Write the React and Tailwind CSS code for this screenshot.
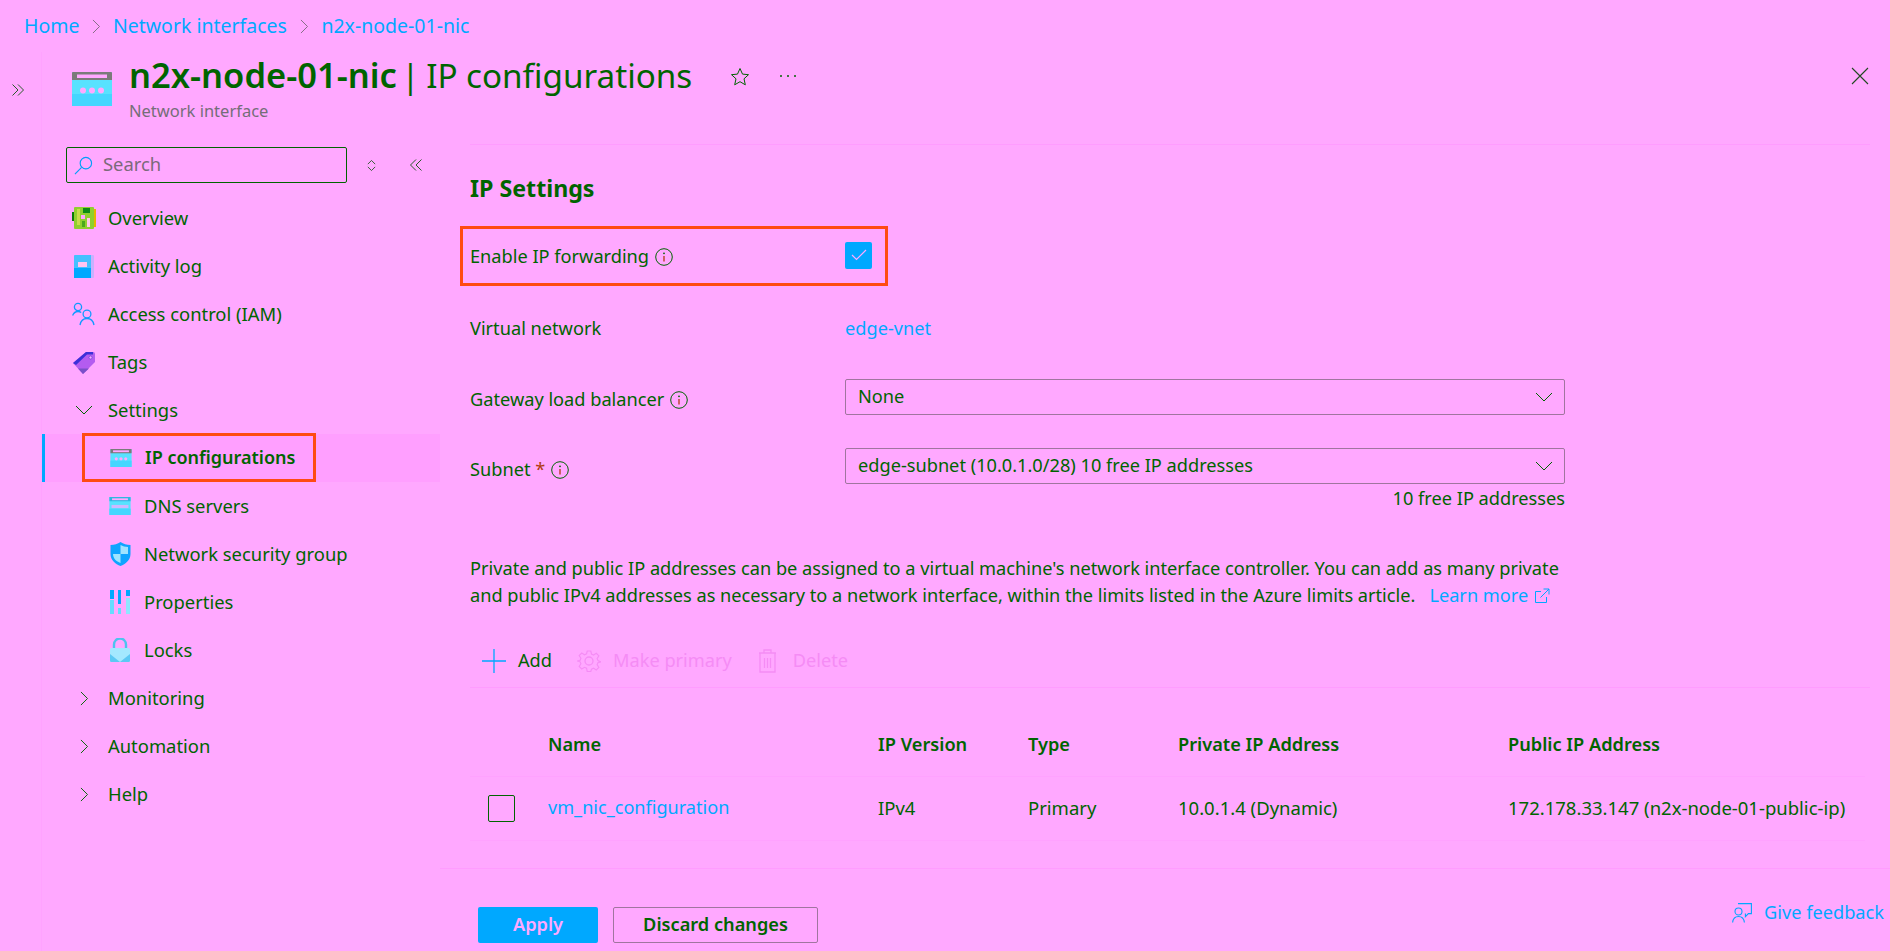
const Chev = ({ dir = "right", size = 15, color = "#006400", className = "" }) => {
  const paths = {
    right: "M1 1l7 7-7 7",
    left: "M8 1L1 8l7 7",
    down: "M1 1l8 8 8-8",
  };
  const box = dir === "down" ? [18, 10] : [9, 16];
  const ratio = size / Math.max(box[0], box[1]);
  return (
    <svg
      viewBox={`0 0 ${box[0]} ${box[1]}`}
      width={box[0] * ratio}
      height={box[1] * ratio}
      fill="none"
      stroke={color}
      strokeWidth="1"
      className={className}
    >
      <path d={paths[dir]} />
    </svg>
  );
};

const DoubleChev = ({ flip, className = "" }) => (
  <svg viewBox="0 0 12 12" className={`w-[12px] h-[12px] ${className}`} fill="none" stroke="#2a5a2a" strokeWidth="1">
    <path d={flip ? "M6 .5.5 6 6 11.500M11.500 .5 6 6l5.500 5.500" : "M.5 .5 6 6 .5 11.500M6 .5 11.500 6 6 11.500"} />
  </svg>
);

const NicIcon = ({ className, dns }) => (
  <svg viewBox="0 0 40 34" className={className}>
    <rect x="0" y="0" width="40" height="34" rx="1" fill="#58e2ff" />
    <rect x="0" y="22" width="40" height="12" fill="#45d6ff" />
    <path d="M0 1a1 1 0 0 1 1-1h38a1 1 0 0 1 1 1v7H0z" fill={dns ? "#2fb8e0" : "#7a7a7a"} />
    <rect x="5" y="2.500" width="30" height="3.500" fill="#ffa8ff" />
    {dns ? (
      <rect x="4" y="15" width="32" height="6" fill="#ffa8ff" opacity="0.7" />
    ) : (
      <>
        <circle cx="11" cy="18.500" r="3" fill="#ffa8ff" />
        <circle cx="20" cy="18.500" r="3" fill="#ffa8ff" />
        <circle cx="29" cy="18.500" r="3" fill="#ffa8ff" />
      </>
    )}
  </svg>
);

const OverviewIcon = () => (
  <svg viewBox="0 0 24 22" className="w-[24px] h-[22px]">
    <rect x="0" y="5" width="3" height="9" fill="#0a7a0a" />
    <rect x="21" y="2" width="3" height="18" fill="#e8b400" />
    <rect x="2" y="0" width="20" height="22" rx="1" fill="#8fcf2f" />
    <rect x="11" y="1" width="7" height="5" fill="#0c8a14" />
    <rect x="5" y="2" width="3" height="16" fill="#c7dc4a" />
    <rect x="9" y="8" width="4" height="4" fill="#ffa8ff" />
    <rect x="15" y="11" width="3" height="9" fill="#ffc8e8" />
    <rect x="10" y="14" width="3" height="6" fill="#4aa81c" />
  </svg>
);

const ActivityIcon = () => (
  <svg viewBox="0 0 20 23" className="w-[20px] h-[23px]">
    <rect x="0" y="0" width="20" height="23" rx="1" fill="#c9b0ff" />
    <path d="M0 1a1 1 0 0 1 1-1h16v23H1a1 1 0 0 1-1-1z" fill="#45c0ff" />
    <rect x="0" y="13" width="17" height="10" fill="#00a8ff" />
    <rect x="4" y="7" width="9" height="5" fill="#ffc4f0" />
  </svg>
);

const IamIcon = () => (
  <svg viewBox="0 0 24 24" className="w-[24px] h-[24px]" fill="none" stroke="#0f9bff" strokeWidth="1.300">
    <circle cx="6" cy="5" r="3.600" />
    <path d="M0.600 13.500c1-2.500 3-4 5.400-4 1.200 0 2.300.4 3.200 1" />
    <circle cx="15" cy="12" r="3.900" />
    <path d="M8 23c.8-4 3.500-6.500 7-6.500s6.200 2.500 7 6.500" />
  </svg>
);

const TagIcon = () => (
  <svg viewBox="0 0 22 23" className="w-[22px] h-[23px]">
    <path d="M13 1h7a2 2 0 0 1 2 2v8L10 23 0 12z" fill="#b45cf0" />
    <path d="M0 12 13 1h7v2.500H14L3 14z" fill="#3b30d8" />
    <path d="M5 17.500h11L10 23z" fill="#7a50c8" />
    <circle cx="17.500" cy="6.500" r="1.500" fill="#ffa8ff" stroke="#5a3ad0" strokeWidth="0.600" />
  </svg>
);

const ShieldIcon = () => (
  <svg viewBox="0 0 21 24" className="w-[21px] h-[24px]">
    <path d="M10.500 0c3 2 6 3 10 3v9c0 6-5 10-10 12C5.500 22 .5 18 .5 12V3c4 0 7-1 10-3z" fill="#0fa4ff" />
    <path d="M10.500 3c2 1.200 5 2 7.500 2v7h-7.500zM10.500 12v9c-4-1.500-7.500-4.500-7.500-9z" fill="#a0e4ff" />
  </svg>
);

const PropertiesIcon = () => (
  <svg viewBox="0 0 20 24" className="w-[20px] h-[24px]">
    <rect x="0" y="0" width="4" height="9" fill="#00a8ff" />
    <rect x="0" y="10" width="4" height="14" fill="#66dcff" />
    <rect x="8" y="0" width="3" height="14" fill="#00a8ff" />
    <rect x="8" y="18" width="3" height="6" fill="#66dcff" />
    <rect x="16" y="0" width="4" height="6" fill="#00a8ff" />
    <rect x="16" y="8" width="4" height="16" fill="#8fe6ff" />
  </svg>
);

const LockIcon = () => (
  <svg viewBox="0 0 20 24" className="w-[20px] h-[24px]">
    <path d="M4 11V6.500a6 6 0 0 1 12 0V11" fill="none" stroke="#4cc4ee" strokeWidth="2.400" />
    <rect x="0" y="10" width="20" height="14" rx="1.500" fill="#a4e8ff" />
    <path d="M0 16l10 8H1.500A1.500 1.500 0 0 1 0 22.500zM20 16l-10 8h8.500a1.500 1.500 0 0 0 1.500-1.500z" fill="#5cc8f4" />
  </svg>
);

const SearchIcon = () => (
  <svg viewBox="0 0 20 20" className="w-[19px] h-[19px]" fill="none" stroke="#00a0f8" strokeWidth="1.200">
    <circle cx="12.500" cy="7.500" r="6" />
    <path d="M8 12 1 19" />
  </svg>
);

const SortIcon = () => (
  <svg viewBox="0 0 12 14" className="w-[11px] h-[13px]" fill="none" stroke="#2a5a2a" strokeWidth="1">
    <path d="M2 5.500 6 1.500l4 4M2 8.500l4 4 4-4" />
  </svg>
);

const InfoIcon = () => (
  <svg viewBox="0 0 18 18" className="w-[18px] h-[18px]" fill="none" stroke="#006400" strokeWidth="1">
    <circle cx="9" cy="9" r="8.300" />
    <path d="M9 8v5.500" stroke="#b03a10" strokeWidth="1.300" />
    <circle cx="9" cy="5.300" r="0.900" fill="#006400" stroke="none" />
  </svg>
);

const GearIcon = () => (
  <svg viewBox="0 0 24 24" className="w-[24px] h-[24px]" fill="none" stroke="#f58cf5" strokeWidth="1.300">
    <circle cx="12" cy="12" r="4" />
    <path d="M10 1h4l.7 3.400 2.300 1 3-1.900 2.800 2.800-1.900 3 1 2.300L25 13v0l-3.100.7-1 2.300 1.900 3-2.800 2.800-3-1.900-2.300 1L14 23.500h-4l-.7-3.600-2.300-1-3 1.900-2.800-2.800 1.900-3-1-2.300L-1 12v0l3.100-.7 1-2.300-1.900-3L4 3.200l3 1.900 2.300-1z" transform="translate(1.100 1.100) scale(0.91)" />
  </svg>
);

const TrashIcon = () => (
  <svg viewBox="0 0 19 24" className="w-[19px] h-[24px]" fill="none" stroke="#f58cf5" strokeWidth="1.300">
    <path d="M1 4h17M6 4V1h7v3M2 4v19h15V4M6.500 9v10M9.500 9v10M12.500 9v10" />
  </svg>
);

const ExternalIcon = () => (
  <svg viewBox="0 0 16 16" className="w-[16px] h-[16px]" fill="none" stroke="#00a8ff" strokeWidth="1">
    <path d="M7 3.500H1.500v11h11V9M9.500 1h5.500v5.500M15 1 6.500 9.500" />
  </svg>
);

const FeedbackIcon = () => (
  <svg viewBox="0 0 20 20" className="w-[20px] h-[20px]" fill="none" stroke="#00a8ff" strokeWidth="1.100">
    <path d="M6 .6h13.400v10h-3l-3 3v-3" />
    <circle cx="6.500" cy="8.500" r="3.500" />
    <path d="M.6 19.500c.4-3.500 2.800-6 5.900-6s5.500 2.500 5.900 6" />
  </svg>
);

const NavItem = ({ icon, label, indent, active }) => {
  const inner = (
    <>
      <span className="flex items-center justify-center w-[28px] mr-[10px]">{icon}</span>
      <span className={active ? "font-semibold text-[18px]" : ""}>{label}</span>
    </>
  );
  if (active) {
    return (
      <div className="h-[48px] flex bg-[#ff9fff] border-l-[3px] border-[#00a8ff]">
        <div className="ml-[37px] w-[234px] h-[49px] -mt-px border-[3px] border-[#ff4b12] flex items-center pl-[22px]">
          {inner}
        </div>
      </div>
    );
  }
  return <div className={`h-[48px] flex items-center ${indent ? "pl-[64px]" : "pl-[28px]"}`}>{inner}</div>;
};

const Select = ({ value }) => (
  <div className="h-[36px] w-[720px] border border-[#a0759f] rounded-[2px] flex items-center justify-between pl-[12px] pr-[11px]">
    <span>{value}</span>
    <Chev dir="down" size={18} />
  </div>
);

const columns = "grid grid-cols-[330px_150px_150px_330px_1fr]";

export default function App() {
  return (
    <div className="w-[1890px] h-[951px] overflow-hidden flex flex-col bg-[#ffa8ff] text-[#006400] text-[18.2px] font-['Noto_Sans',sans-serif]">
      {/* Breadcrumb */}
      <div className="h-[52px] shrink-0 flex items-center pl-[24px] text-[#00a8ff] text-[19.5px]">
        <span>Home</span>
        <Chev size={15} color="#806a80" className="mx-[12.5px]" />
        <span>Network interfaces</span>
        <Chev size={15} color="#806a80" className="mx-[13px]" />
        <span>n2x-node-01-nic</span>
      </div>

      <div className="flex-1 flex min-h-0">
        {/* Collapsed rail */}
        <div className="w-[42px] shrink-0 border-r border-[#ffa2ff] pl-[12px] pt-[32px]">
          <DoubleChev />
        </div>

        <div className="flex-1 flex flex-col min-w-0">
          {/* Header */}
          <div className="h-[92px] shrink-0 flex pl-[30px] pr-[18px]">
            <NicIcon className="w-[40px] h-[34px] mt-[20px]" />
            <div className="ml-[17px] mt-[1px]">
              <div className="text-[33.2px] leading-[44px] whitespace-nowrap">
                <span className="font-semibold text-[34.5px]">n2x-node-01-nic</span>
                <span className="ml-[4.5px]">|</span>
                <span className="ml-[6.5px]">IP configurations</span>
              </div>
              <div className="text-[16.5px] leading-[22px] text-[#746e78] mt-[2px]">Network interface</div>
            </div>
            <svg viewBox="0 0 20 20" className="w-[20px] h-[20px] ml-[38px] mt-[15px]" fill="none" stroke="#006400" strokeWidth="1">
              <path d="M10 1.500l2.500 5.600 6 .6-4.500 4.100 1.300 6-5.300-3.100-5.300 3.100 1.300-6L1.500 7.700l6-.6z" />
            </svg>
            <svg viewBox="0 0 18 4" className="w-[18px] h-[4px] ml-[29px] mt-[22px]" fill="#006400">
              <circle cx="2" cy="2" r="1" />
              <circle cx="9" cy="2" r="1" />
              <circle cx="16" cy="2" r="1" />
            </svg>
            <svg viewBox="0 0 18 18" className="w-[18px] h-[18px] ml-auto mt-[15px] mr-[3px]" fill="none" stroke="#224a22" strokeWidth="1.100">
              <path d="M1 1l16 16M17 1 1 17" />
            </svg>
          </div>

          <div className="flex-1 flex min-h-0">
            {/* Sidebar */}
            <div className="w-[398px] shrink-0 pt-[3px] text-[18.4px]">
              <div className="flex items-center h-[36px] pl-[24px]">
                <div className="w-[281px] h-[36px] border border-[#006400] rounded-[2px] flex items-center pl-[7px] gap-[10px] text-[#7a6a7a]">
                  <SearchIcon />
                  <span className="-mt-[2px]">Search</span>
                </div>
                <span className="ml-[19px]"><SortIcon /></span>
                <DoubleChev flip className="ml-[33px]" />
              </div>
              <div className="mt-[11px]">
                <NavItem icon={<OverviewIcon />} label="Overview" />
                <NavItem icon={<ActivityIcon />} label="Activity log" />
                <NavItem icon={<IamIcon />} label="Access control (IAM)" />
                <NavItem icon={<TagIcon />} label="Tags" />
                <NavItem icon={<Chev dir="down" size={18} />} label="Settings" />
                <NavItem active indent icon={<NicIcon className="w-[22px] h-[18px]" />} label="IP configurations" />
                <NavItem indent icon={<NicIcon dns className="w-[22px] h-[18px]" />} label="DNS servers" />
                <NavItem indent icon={<ShieldIcon />} label="Network security group" />
                <NavItem indent icon={<PropertiesIcon />} label="Properties" />
                <NavItem indent icon={<LockIcon />} label="Locks" />
                <NavItem icon={<Chev size={15} />} label="Monitoring" />
                <NavItem icon={<Chev size={15} />} label="Automation" />
                <NavItem icon={<Chev size={15} />} label="Help" />
              </div>
            </div>

            {/* Main */}
            <div className="flex-1 flex flex-col min-w-0">
              <div className="flex-1 pl-[30px] pr-[20px] min-h-0">
                <div className="border-t border-[#ff9cff] pt-[28px]">
                  <h2 className="text-[23.2px] leading-[30px] font-bold">IP Settings</h2>
                </div>

                <div className="mt-[23px] -ml-[10px] w-[428px] h-[60px] border-[3px] border-[#ff4b12] flex items-center pl-[7px] pr-[13px]">
                  <span className="pt-[2px]">Enable IP forwarding</span>
                  <span className="ml-[6px] pt-[2px]"><InfoIcon /></span>
                  <span className="ml-auto w-[27px] h-[27px] rounded-[2px] bg-[#00a8ff] flex items-center justify-center -mt-[2px]">
                    <svg viewBox="0 0 16 12" className="w-[16px] h-[12px]" fill="none" stroke="#ffa8ff" strokeWidth="1.200">
                      <path d="M1 6l4.500 4.500L15 1" />
                    </svg>
                  </span>
                </div>

                <div className="mt-[24px] h-[36px] flex items-center pt-[1px]">
                  <span className="w-[375px]">Virtual network</span>
                  <span className="text-[#00a8ff]">edge-vnet</span>
                </div>

                <div className="mt-[33px] h-[36px] flex items-center">
                  <span className="w-[375px] flex items-center gap-[6px] translate-y-[3px]">Gateway load balancer <InfoIcon /></span>
                  <Select value="None" />
                </div>

                <div className="mt-[33px] h-[36px] flex items-center">
                  <span className="w-[375px] flex items-center gap-[6px] translate-y-[4px]">
                    <span>
                      Subnet <span className="text-[#b03a10]">*</span>
                    </span>
                    <InfoIcon />
                  </span>
                  <Select value="edge-subnet (10.0.1.0/28) 10 free IP addresses" />
                </div>
                <div className="w-[1095px] flex justify-end leading-[26px] mt-px">
                  <span>10 free IP addresses</span>
                </div>

                <p className="mt-[44px] w-[1110px] leading-[27px]">
                  Private and public IP addresses can be assigned to a virtual machine's network interface controller. You can add as many private and public IPv4 addresses as necessary to a network interface, within the limits listed in the Azure limits article.
                  <span className="text-[#00a8ff] ml-[14px] inline-flex items-center gap-[6px]">Learn more <ExternalIcon /></span>
                </p>

                <div className="mt-[33px] h-[46px] border-b border-[#ff9cff] flex items-center pb-[8px] pl-[12px]">
                  <svg viewBox="0 0 24 24" className="w-[24px] h-[24px]" fill="none" stroke="#00a8ff" strokeWidth="1.300">
                    <path d="M12 0v24M0 12h24" />
                  </svg>
                  <span className="ml-[12px]">Add</span>
                  <span className="ml-[25px]"><GearIcon /></span>
                  <span className="ml-[12px] text-[#f58cf5]">Make primary</span>
                  <span className="ml-[26px]"><TrashIcon /></span>
                  <span className="ml-[16px] text-[#f58cf5]">Delete</span>
                </div>

                <div className="pr-[5px] text-[18.5px]">
                  <div className={`${columns} h-[89px] pt-[44px] leading-[24px] pl-[78px] font-semibold border-b border-[#ffa2ff]`}>
                    <span className="text-[18.2px]">Name</span>
                    <span className="text-[18.2px]">IP Version</span>
                    <span className="text-[18.2px]">Type</span>
                    <span className="text-[18.2px]">Private IP Address</span>
                    <span className="text-[18.2px]">Public IP Address</span>
                  </div>
                  <div className="h-[64px] flex items-center border-b border-[#ffa2ff] pl-[18px]">
                    <span className="w-[27px] h-[27px] border border-[#006400] rounded-[2px] shrink-0" />
                    <div className={`${columns} flex-1 ml-[33px] -mt-[2px]`}>
                      <span className="text-[#00a8ff] text-[18.1px]">vm_nic_configuration</span>
                      <span>IPv4</span>
                      <span>Primary</span>
                      <span>10.0.1.4 (Dynamic)</span>
                      <span className="whitespace-nowrap">172.178.33.147 (n2x-node-01-public-ip)</span>
                    </div>
                  </div>
                </div>
              </div>

              {/* Footer */}
              <div className="h-[83px] shrink-0 border-t border-[#ff9cff] flex pl-[38px] pr-[6px] pt-[38px]">
                <button className="w-[120px] h-[36px] rounded-[2px] bg-[#00a8ff] text-[#ffa8ff] font-semibold">Apply</button>
                <button className="ml-[15px] w-[205px] h-[36px] rounded-[2px] border border-[#a0759f] font-semibold">Discard changes</button>
                <div className="ml-auto h-[36px] -mt-[12px] flex items-center gap-[12px] text-[#00a8ff]">
                  <FeedbackIcon />
                  <span>Give feedback</span>
                </div>
              </div>
            </div>
          </div>
        </div>
      </div>
    </div>
  );
}
